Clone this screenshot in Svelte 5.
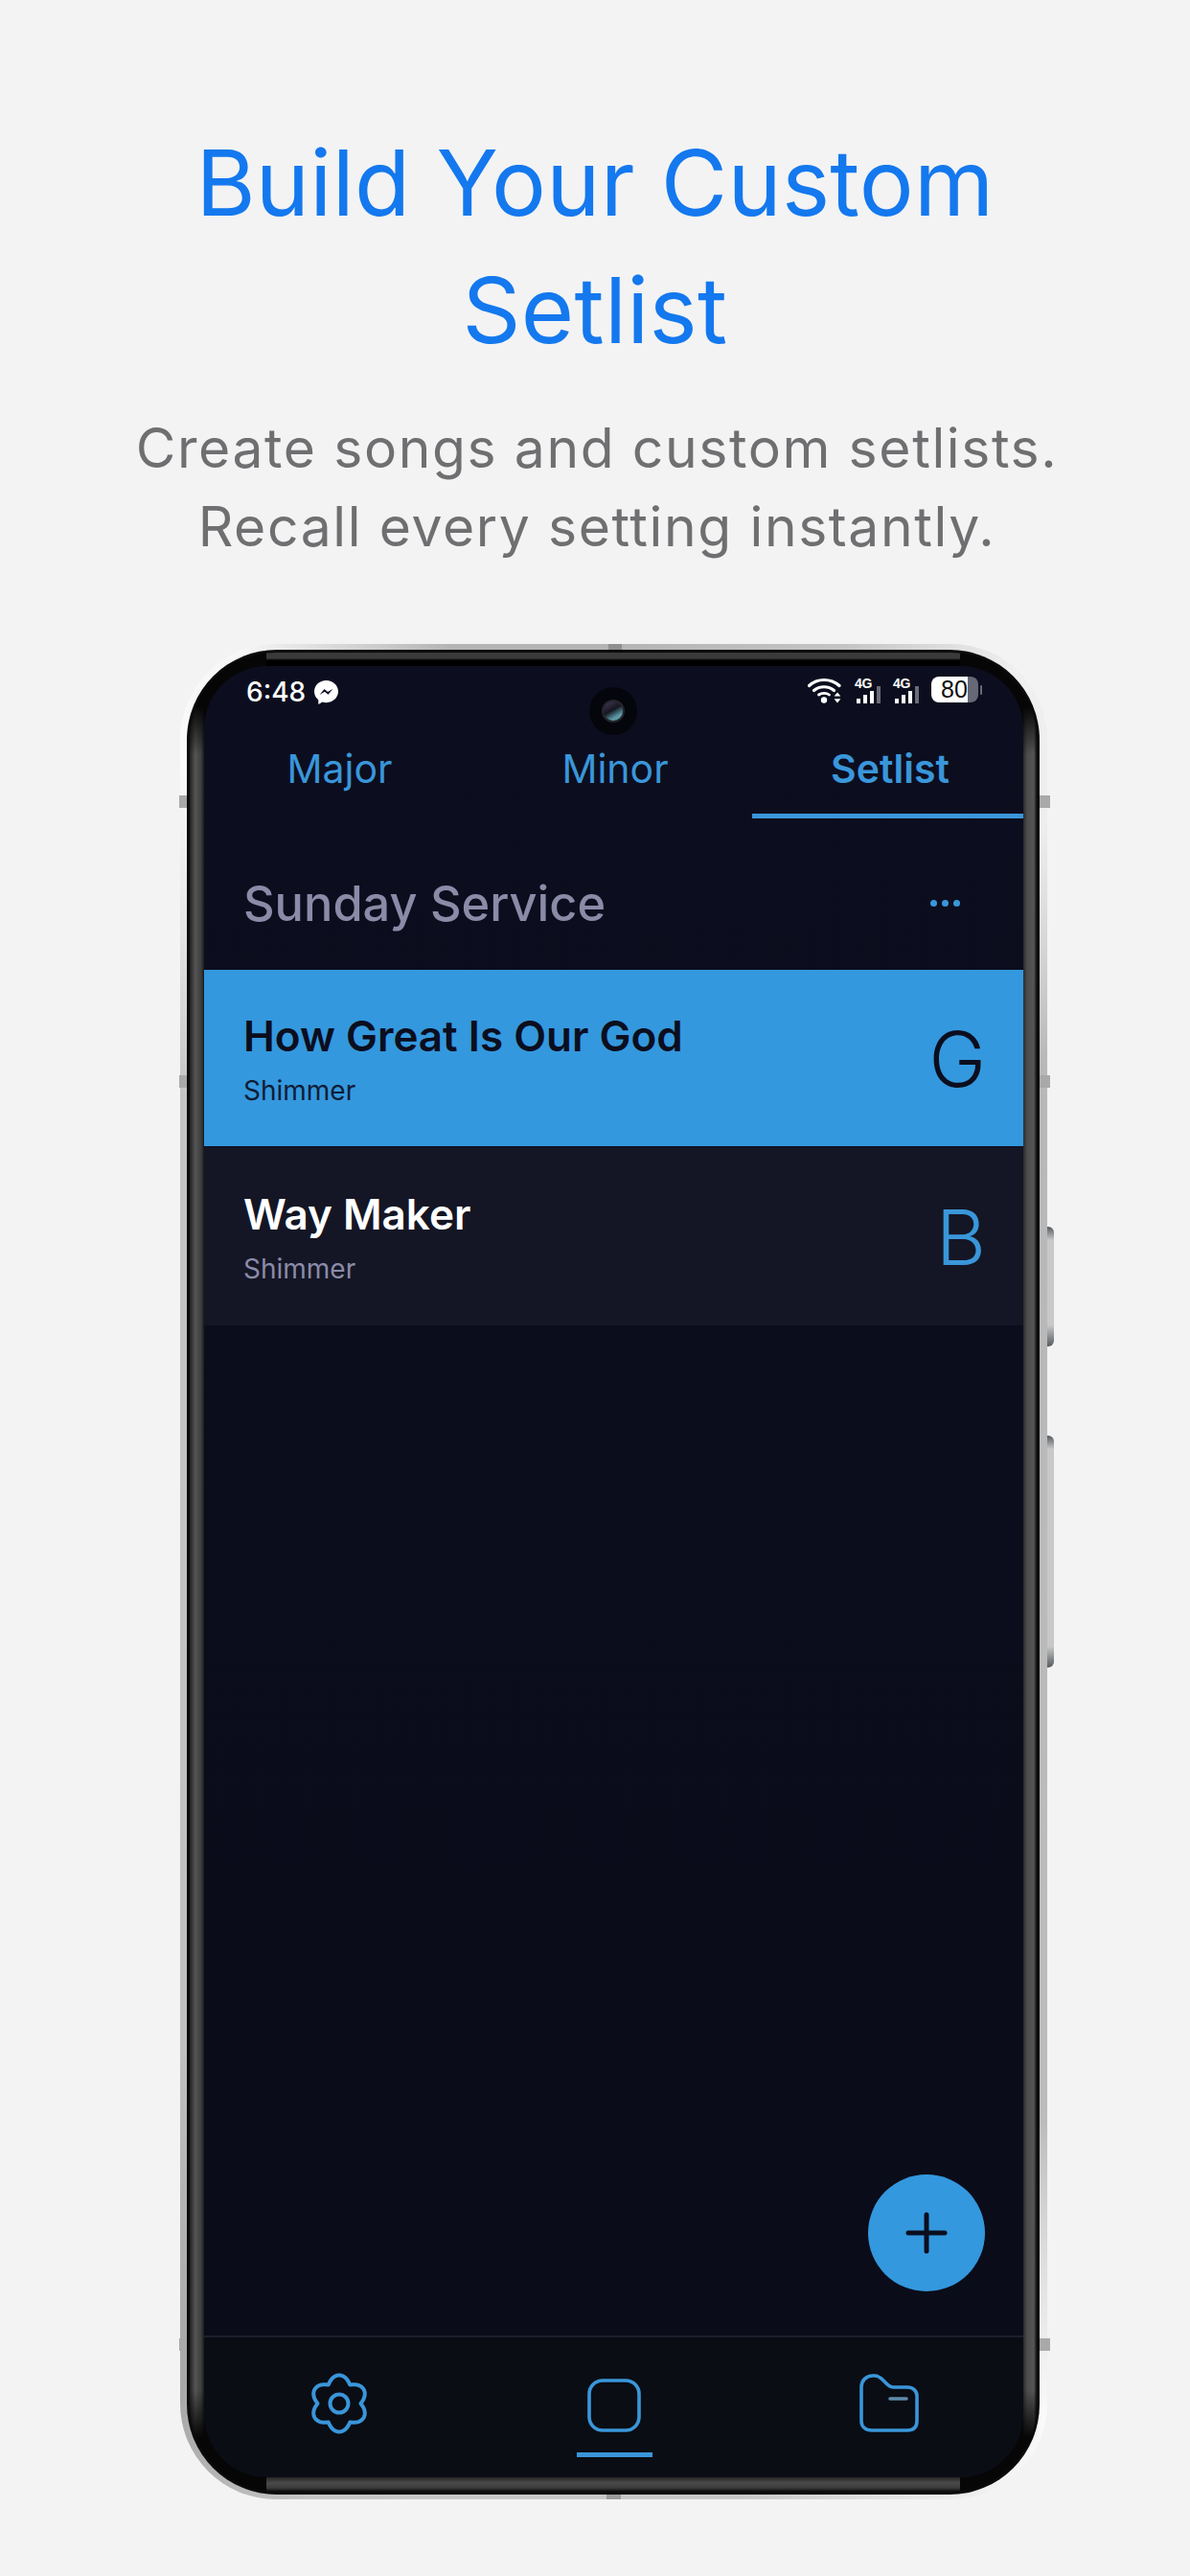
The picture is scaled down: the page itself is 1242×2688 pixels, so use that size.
<script>
  const tabs = [
    { label: 'Major', active: false },
    { label: 'Minor', active: false },
    { label: 'Setlist', active: true }
  ];
  const songs = [
    { title: 'How Great Is Our God', artist: 'Shimmer', key: 'G', selected: true },
    { title: 'Way Maker', artist: 'Shimmer', key: 'B', selected: false }
  ];
  function gearPath() {
    const cx = 32, cy = 32, pts = [];
    for (let i = 0; i < 240; i++) {
      const t = (i / 240) * Math.PI * 2;
      const k = Math.pow((1 + Math.cos(6 * t)) / 2, 0.55);
      const r = 22.5 + 7 * k;
      pts.push(`${(cx + r * Math.sin(t)).toFixed(2)} ${(cy - r * Math.cos(t)).toFixed(2)}`);
    }
    return 'M' + pts.join('L') + 'Z';
  }
  const gear = gearPath();
</script>

<div class="page">
  <header class="intro">
    <h1>Build Your Custom<br />Setlist</h1>
    <p>Create songs and custom setlists.<br />Recall every setting instantly.</p>
  </header>

  <div class="phone">
    <span class="btn vol"></span>
    <span class="btn pow"></span>
    <span class="tick tl1"></span>
    <span class="tick tl2"></span>
    <span class="tick tl3"></span>
    <span class="tick tr1"></span>
    <span class="tick tr2"></span>
    <span class="tick tr3"></span>
    <span class="tick top"></span>
    <span class="tick bot"></span>
    <div class="frame">
      <div class="bezel">
        <div class="screen">
          <div class="status">
            <div class="left">
              <span class="time">6:48</span>
              <svg class="msg" width="27" height="27" viewBox="0 0 27 27">
                <path d="M13.5 1C6.6 1 1 6.1 1 12.6c0 3.5 1.6 6.6 4.3 8.7V26l4.3-2.4c1.2.4 2.6.6 3.9.6 6.9 0 12.5-5.2 12.5-11.6S20.4 1 13.5 1z" fill="#fff" />
                <path d="M6.5 16l5-6 3.6 3 5.4-3.2-5 6-3.6-3z" fill="#0c0e1f" />
              </svg>
            </div>
            <div class="right">
              <svg class="wifi" width="36" height="28" viewBox="0 0 36 28" fill="none" stroke="#fff" stroke-linecap="round">
                <path d="M1.5 9.5C10 1.5 24 1.5 33 9.5" stroke-width="3.2" />
                <path d="M6.5 14.5c6-5 15-5 21 0" stroke-width="3.2" />
                <path d="M11.5 19c3.2-2.3 8-2.3 11 0" stroke-width="2.8" />
                <circle cx="17" cy="24.5" r="3.2" fill="#fff" stroke="none" />
                <path d="M31 16.5l3.4 4h-6.8zM31 27.5l3.4-4.2h-6.8z" fill="#fff" stroke="none" />
              </svg>
              {#each [0, 1] as s}
                <div class="signal" data-sim={s}>
                  <span>4G</span>
                  <div class="bars">
                    <i class="b1"></i><i class="b2"></i><i class="b3"></i><i class="b4"></i>
                  </div>
                </div>
              {/each}
              <div class="battery">
                <div class="cell"><span>80</span></div>
                <i class="nub"></i>
              </div>
            </div>
          </div>
          <div class="camera"><i></i></div>

          <nav class="tabs">
            {#each tabs as t}
              <div class="tab" class:active={t.active}>{t.label}</div>
            {/each}
          </nav>

          <div class="section">
            <h2>Sunday Service</h2>
            <div class="more"><i></i><i></i><i></i></div>
          </div>

          <div class="list">
            {#each songs as s}
              <div class="song" class:selected={s.selected}>
                <div class="info">
                  <div class="title">{s.title}</div>
                  <div class="artist">{s.artist}</div>
                </div>
                <div class="key">{s.key}</div>
              </div>
            {/each}
          </div>

          <button class="fab" aria-label="Add">
            <svg width="44" height="44" viewBox="0 0 44 44" stroke="#0b0e1e" stroke-width="5" stroke-linecap="round">
              <path d="M22 3v38M3 22h38" />
            </svg>
          </button>

          <footer class="bottom">
            <div class="navitem gear">
              <svg width="64" height="64" viewBox="0 0 64 64" fill="none" stroke="#3a96da" stroke-width="4" stroke-linejoin="round">
                <path d={gear} />
                <circle cx="32" cy="32" r="9.5" stroke-width="4" />
              </svg>
            </div>
            <div class="navitem current">
              <svg width="58" height="58" viewBox="0 0 58 58" fill="none" stroke="#3a96da" stroke-width="3.6">
                <rect x="3" y="3" width="52" height="52" rx="14" />
              </svg>
            </div>
            <div class="navitem folder">
              <svg width="64" height="64" viewBox="0 0 64 64" fill="none" stroke="#3a96da" stroke-width="3.6" stroke-linejoin="round">
                <path d="M3 15C3 8 8 3 15 3h2c4 0 6 2 9 5l4 4c2 2 3 3 6 3h15c6 0 10 4 10 9v26c0 7-4 10-10 10H14C7 60 3 56 3 50z" />
                <path d="M33 27h17" stroke="#5f8bab" stroke-linecap="round" />
              </svg>
            </div>
          </footer>
        </div>
      </div>
    </div>
  </div>
</div>

<style>
  :global(body) {
    margin: 0;
    background: #f3f3f3;
  }
  .page {
    width: 1242px;
    height: 2688px;
    background: #f3f3f3;
    overflow: hidden;
    display: flex;
    flex-direction: column;
    font-family: Inter, "Liberation Sans", sans-serif;
  }
  .intro {
    text-align: center;
    padding-top: 124px;
    height: 548px;
    box-sizing: border-box;
  }
  h1 {
    margin: 0;
    font-family: Inter, sans-serif;
    font-weight: 400;
    font-size: 95px;
    line-height: 133px;
    letter-spacing: 0.3px;
    color: #1478ee;
  }
  .intro p {
    margin: 37px 0 0;
    padding-left: 4px;
    font-weight: 400;
    font-size: 57px;
    line-height: 82px;
    letter-spacing: 1.6px;
    color: #6f6f72;
  }
  .phone {
    position: relative;
    width: 905px;
    height: 1936px;
    margin: 124px 0 0 188px;
    box-sizing: border-box;
    padding: 6px 8px 5px 7px;
    border-radius: 100px;
    background: conic-gradient(#b4b4b4 0deg, #c4c4c4 14deg, #f0f0f0 24deg, #eeeeee 30deg, #b8b8b8 40deg, #bcbcbc 142deg, #fafafa 153deg, #ececec 160deg, #c8c8c8 172deg, #c6c6c6 198deg, #a8a8a8 208deg, #c0c0c0 222deg, #c4c4c4 318deg, #fafafa 332deg, #f6f6f6 338deg, #b4b4b4 350deg);
  }
  .btn {
    position: absolute;
    left: 905px;
    width: 7px;
    background: linear-gradient(#555b60 0, #c8c8c8 14px, #c8c8c8 calc(100% - 22px), #555b60 100%);
    border-radius: 0 6px 6px 0;
  }
  .vol { top: 608px; height: 125px; }
  .pow { top: 826px; height: 242px; }
  .tick { position: absolute; background: #a9a9a9; }
  .tl1, .tl2, .tl3 { left: -1px; width: 8px; height: 13px; }
  .tr1, .tr2, .tr3 { right: -3px; width: 11px; height: 13px; }
  .tl1, .tr1 { top: 158px; }
  .tl2, .tr2 { top: 450px; }
  .tl3, .tr3 { top: 1768px; }
  .top { top: 0; left: 447px; width: 14px; height: 6px; background: #8f8f8f; }
  .bot { bottom: 0; left: 445px; width: 15px; height: 5px; background: #9a9a9a; }
  .frame {
    height: 100%;
    box-sizing: border-box;
    padding: 3px;
    border-radius: 94px;
    background: #0b0b0b;
  }
  .bezel {
    height: 100%;
    box-sizing: border-box;
    padding: 14px 14px 15px 15px;
    border-radius: 90px;
    background:
      linear-gradient(#060606, transparent) 0 56px / 100% 50px no-repeat,
      linear-gradient(transparent, #060606) 0 calc(100% - 56px) / 100% 50px no-repeat,
      linear-gradient(90deg, #222 0, #555 6px, #3d3d3d 12px, #1a1a1a 15px) 0 56px / 15px calc(100% - 112px) no-repeat,
      linear-gradient(270deg, #111 0, #555 3px, #4c4c4c 10px, #2a2a2a 14px) 100% 56px / 14px calc(100% - 112px) no-repeat,
      linear-gradient(#262626, #4a4a4a 6px, #3b3b3b 11px, #0a0a0a 15px) 80px 100% / calc(100% - 160px) 15px no-repeat,
      linear-gradient(#3a3a3a 0, #3a3a3a 6px, #000 8px) 80px 0 / calc(100% - 160px) 14px no-repeat,
      #060606;
  }
  .screen {
    position: relative;
    height: 100%;
    display: flex;
    flex-direction: column;
    overflow: hidden;
    border-radius: 66px;
    background: linear-gradient(#0c0e1f, #0a0c19);
  }
  .status {
    height: 65px;
    flex: none;
    box-sizing: border-box;
    padding: 11px 43px 0 44px;
    display: flex;
    justify-content: space-between;
    align-items: flex-start;
    color: #fff;
  }
  .left {
    display: flex;
    align-items: center;
    gap: 8px;
  }
  .time {
    font-size: 28px;
    line-height: 32px;
    font-weight: 500;
  }
  .right {
    display: flex;
    align-items: flex-start;
    gap: 12px;
  }
  .wifi { margin-right: 1px; }
  .signal {
    width: 28px;
    height: 28px;
    position: relative;
  }
  .signal span {
    position: absolute;
    top: 0;
    left: 0;
    font-family: "Liberation Sans", sans-serif;
    font-weight: 700;
    font-size: 14px;
    line-height: 14px;
    letter-spacing: -0.4px;
  }
  .bars {
    position: absolute;
    left: 2px;
    bottom: 0;
    display: flex;
    align-items: flex-end;
    gap: 3px;
  }
  .bars i {
    display: block;
    width: 4px;
    background: #fff;
  }
  .b1 { height: 5px; }
  .b2 { height: 9px; }
  .b3 { height: 13px; }
  .bars .b4 { height: 18px; background: #6a6c78; }
  .battery {
    display: flex;
    align-items: center;
    gap: 2px;
  }
  .cell {
    width: 49px;
    height: 27px;
    border-radius: 8px;
    background: linear-gradient(90deg, #fff 0, #fff 38px, #666876 38px);
    position: relative;
  }
  .cell span {
    position: absolute;
    left: 10px;
    top: 0;
    font-family: "Liberation Sans", sans-serif;
    font-size: 25px;
    line-height: 27px;
    color: #111;
  }
  .nub {
    display: block;
    width: 2px;
    height: 10px;
    border-radius: 1px;
    background: #666876;
  }
  .camera {
    position: absolute;
    left: 402px;
    top: 22px;
    width: 50px;
    height: 50px;
    border-radius: 50%;
    background: #05060c;
    display: flex;
    align-items: center;
    justify-content: center;
  }
  .camera i {
    display: block;
    width: 24px;
    height: 24px;
    border-radius: 50%;
    box-sizing: border-box;
    border: 2px solid #24262c;
    background: linear-gradient(150deg, #4a3a5e 0, #15161f 45%, #5d9aa6 75%);
  }
  .tabs {
    display: flex;
    flex: none;
    height: 94px;
  }
  .tab {
    flex: 0 0 286px;
    box-sizing: border-box;
    text-align: center;
    font-size: 41px;
    line-height: 84px;
    color: #3a96da;
  }
  .tab:first-child { padding-right: 3px; }
  .tab.active {
    flex: 0 0 283px;
    padding-left: 5px;
    font-weight: 600;
    border-bottom: 5px solid #3a96da;
  }
  .section {
    flex: none;
    height: 158px;
    box-sizing: border-box;
    padding: 18px 66px 0 41px;
    display: flex;
    align-items: center;
    justify-content: space-between;
  }
  h2 {
    margin: 0;
    font-size: 50.5px;
    font-weight: 500;
    color: #8b8ba8;
  }
  .more {
    display: flex;
    gap: 5px;
  }
  .more i {
    width: 7px;
    height: 7px;
    border-radius: 50%;
    background: #3a96da;
  }
  .list {
    flex: 1;
  }
  .song {
    height: 186px;
    box-sizing: border-box;
    padding: 0 43px 0 41px;
    display: flex;
    align-items: center;
    justify-content: space-between;
    background: #141625;
    margin-bottom: 1px;
  }
  .song.selected {
    background: #3498de;
    height: 184px;
  }
  .title {
    font-size: 44px;
    line-height: 54px;
    font-weight: 600;
    color: #fff;
  }
  .selected .title { color: #0b0e1e; }
  .artist {
    margin-top: 14px;
    font-size: 28px;
    line-height: 32px;
    color: #8b8ba8;
  }
  .selected .artist { color: #0f1c36; }
  .key {
    font-size: 80px;
    line-height: 90px;
    font-weight: 275;
    color: #3a96da;
    margin: 2px -4px 0 0;
  }
  .selected .key { color: #0b0e1e; }
  .fab {
    position: absolute;
    right: 40px;
    bottom: 194px;
    width: 122px;
    height: 122px;
    border: 0;
    padding: 0;
    border-radius: 50%;
    background: #3498de;
    display: flex;
    align-items: center;
    justify-content: center;
  }
  .bottom {
    flex: none;
    height: 148px;
    box-sizing: border-box;
    border-top: 2px solid #1c1f2b;
    background: #0a0d14;
    display: flex;
  }
  .navitem {
    flex: 0 0 285px;
    box-sizing: border-box;
    display: flex;
    justify-content: center;
    padding-top: 37px;
    position: relative;
  }
  .navitem.gear { padding-right: 3px; }
  .navitem.current { padding-top: 42px; padding-left: 1px; }
  .navitem.folder { padding-left: 5px; }
  .navitem.current::after {
    content: "";
    position: absolute;
    left: 50%;
    top: 120px;
    width: 79px;
    height: 5px;
    margin-left: -39px;
    background: #3a96da;
  }
</style>
